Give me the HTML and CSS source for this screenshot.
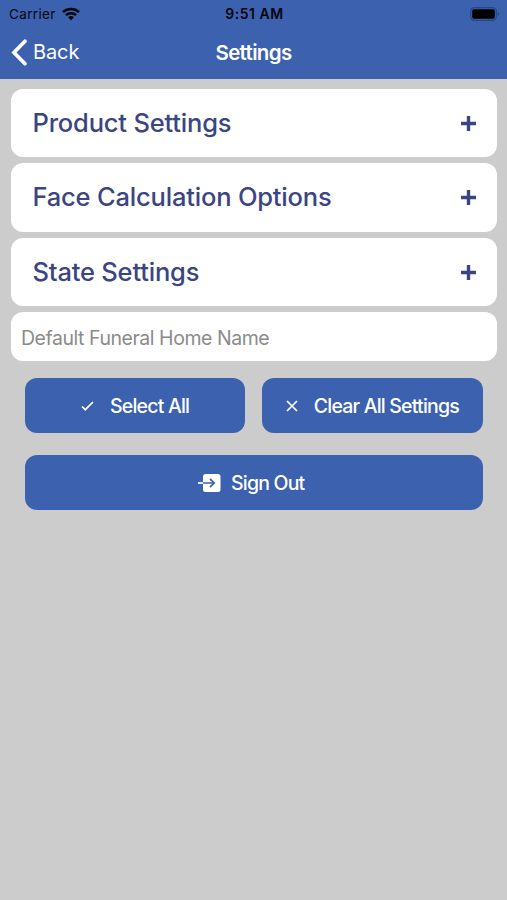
FILE: index.html
```html
<!DOCTYPE html>
<html lang="en">
<head>
<meta charset="utf-8">
<title>Settings</title>
<link rel="stylesheet" href="styles.css">
</head>
<body>
<header class="header">
  <div class="status">
    <div class="carrier"><span>Carrier</span>
      <svg width="18" height="14" viewBox="0 0 18 14"><g fill="none" stroke="#05070c" stroke-width="2.5"><path d="M1 5.1C5.4.9 12.6.9 17 5.1"/><path d="M3.9 8.2c2.8-2.7 7.4-2.7 10.2 0"/></g><path d="M9 13.2l-2.900-3c1.600-1.500 4.200-1.500 5.800 0z" fill="#05070c"/></svg>
    </div>
    <div class="time">9:51 AM</div>
    <svg class="battery" width="30" height="14" viewBox="0 0 30 14"><rect x=".7" y=".7" width="25.600" height="12.600" rx="3.600" fill="none" stroke="#2b467f" stroke-width="1.200"/><rect x="2.200" y="2.300" width="22.600" height="9.400" rx="1.800"/><path d="M27.800 5v4c1.800-.7 1.800-3.300 0-4z" fill="#2b467f"/></svg>
  </div>
  <nav class="nav">
    <a class="back"><svg width="17" height="27" viewBox="0 0 17 27"><path d="M14 2.300L3 13.500L14 24.700" fill="none" stroke="#fff" stroke-width="3.700" stroke-linecap="round"/></svg><span>Back</span></a>
    <h1 class="title">Settings</h1>
  </nav>
</header>
<main class="content">
  <section class="card"><span class="label">Product Settings</span><svg class="plus" viewBox="0 0 15 15"><path d="M7.500 0v15M0 7.500h15"/></svg></section>
  <section class="card"><span class="label">Face Calculation Options</span><svg class="plus" viewBox="0 0 15 15"><path d="M7.500 0v15M0 7.500h15"/></svg></section>
  <section class="card"><span class="label">State Settings</span><svg class="plus" viewBox="0 0 15 15"><path d="M7.500 0v15M0 7.500h15"/></svg></section>
  <input class="field" type="text" placeholder="Default Funeral Home Name">
  <div class="actions">
    <button class="btn select"><svg width="13" height="12" viewBox="0 0 13 12"><path d="M1 6.500l3.300 3.200L12 2"/></svg><span>Select All</span></button>
    <button class="btn clear"><svg width="12" height="12" viewBox="0 0 12 12"><path d="M1 1l10 10M11 1L1 11"/></svg><span>Clear All Settings</span></button>
    <button class="btn signout"><svg width="23" height="18" viewBox="0 0 23 18"><rect class="door" x="5" y="0" width="17.500" height="18" rx="2.500"/><path d="M0 9h5"/><path class="arrow" d="M5 9h11M12 4.800L16.200 9L12 13.200"/></svg><span>Sign Out</span></button>
  </div>
</main>
</body>
</html>
```
FILE: styles.css
```css
* { box-sizing: border-box; }
body { margin: 0; min-height: 900px; background: #ccc; font-family: Inter, "Liberation Sans", sans-serif; }
svg { display: block; flex: none; }
.header { height: 79px; background: #3c61af; }
.status { display: grid; grid-template-columns: 1fr auto 1fr; align-items: center; height: 27px; padding: 0 7px 0 9px; color: #05070c; }
.carrier { display: flex; align-items: center; gap: 6px; font-size: 13.500px; letter-spacing: .35px; }
.time { font-size: 14px; font-weight: 600; letter-spacing: .5px; }
.battery { justify-self: end; }
.nav { display: grid; grid-template-columns: 1fr auto 1fr; align-items: center; height: 50px; padding: 0 11px; color: #fff; }
.back { display: flex; align-items: center; gap: 5px; font-size: 20px; letter-spacing: -.1px; }
.title { margin: 0; font-size: 20.500px; font-weight: 600; letter-spacing: -.65px; }
.content { display: flex; flex-direction: column; gap: 6.200px; padding: 10px 10px 0 11px; }
.card { display: flex; align-items: center; justify-content: space-between; height: 68.300px; padding: 0 21px 0 21.500px; border-radius: 12px; background: #fff; color: #3b4583; }
.label { padding-bottom: 2px; font-size: 25.500px; font-weight: 450; letter-spacing: -.19px; }
.plus { width: 15px; height: 15px; stroke: #3b4583; stroke-width: 3.400px; }
.field { height: 49px; width: 100%; border: 0; border-radius: 12px; padding: 3px 10px 0; background: #fff; font: 19.500px Inter, "Liberation Sans", sans-serif; letter-spacing: -.46px; }
.field::placeholder { color: #8b8b8b; opacity: 1; }
.actions { display: grid; grid-template-columns: 1fr 1fr; gap: 22px 17px; padding: 10.300px 14.500px 0 14px; }
.btn { display: flex; align-items: center; justify-content: center; height: 55px; padding: 1.500px 0 0; border: 0; border-radius: 12px; background: #3c61af; color: #fff; font: 500 19.500px Inter, "Liberation Sans", sans-serif; letter-spacing: -.8px; white-space: nowrap; }
.btn svg { fill: none; stroke: #fff; stroke-width: 1.700px; }
.select, .clear { gap: 16px; }
.signout { grid-column: 1 / -1; gap: 10px; padding-right: 5px; }
.btn .door { fill: #fff; stroke: none; }
.btn .arrow { stroke: #3c61af; }
```
